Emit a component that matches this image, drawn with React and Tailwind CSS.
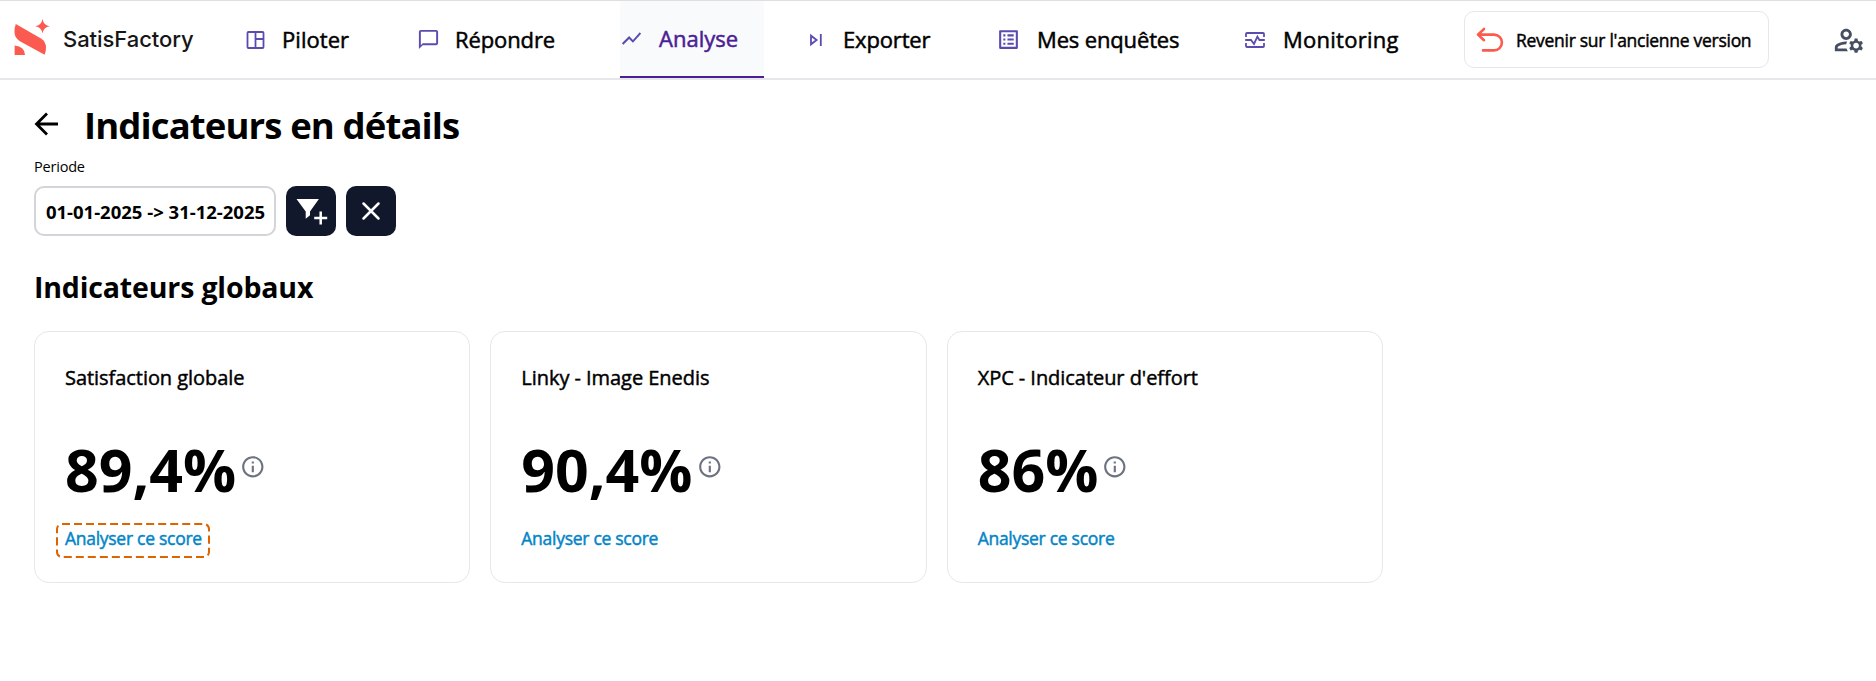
import {
  MdChatBubbleOutline,
  MdInfoOutline,
  MdOutlineListAlt,
  MdOutlineManageAccounts,
  MdShowChart,
} from "react-icons/md"

// dashboard icon used by "Piloter"
function PanelIcon() {
  return (
    <svg width="24" height="24" viewBox="0 0 24 24" fill="none" stroke="currentColor" strokeWidth="1.8">
      <rect x="3.5" y="4" width="16" height="16" rx="1" />
      <path d="M11.500 4v16M11.500 11h8" />
    </svg>
  )
}

function SkipIcon() {
  return (
    <svg width="24" height="24" viewBox="0 0 24 24" fill="none" stroke="currentColor" strokeWidth="1.8">
      <path d="M7 7.700v8.600l5.600-4.300zM16.800 6v12" />
    </svg>
  )
}

function PulseIcon() {
  return (
    <svg width="24" height="24" viewBox="0 0 24 24" fill="none" stroke="currentColor" strokeWidth="1.8">
      <path d="M3 9V6q0-1 1-1h16q1 0 1 1v3M3 15v3q0 1 1 1h16q1 0 1-1v-3" />
      <path d="M2.200 12H8l3 4 3.400-7.400L16.400 12h5.400" />
    </svg>
  )
}

const navItems = [
  { label: "Piloter", icon: <PanelIcon />, width: "w-[133px]", text: "tracking-[0.05px]" },
  { label: "Répondre", icon: <MdChatBubbleOutline size={23} />, width: "w-[163px]", iconPos: "-ml-[1.5px]", text: "tracking-[-0.1px]" },
  { label: "Analyse", icon: <MdShowChart size={23} />, width: "w-[144px]", active: true, iconPos: "-ml-px", text: "ml-px" },
  { label: "Exporter", icon: <SkipIcon />, width: "w-[153px]", text: "ml-px tracking-[-0.15px]" },
  { label: "Mes enquêtes", icon: <MdOutlineListAlt size={25} />, width: "w-[206px]", iconPos: "-ml-px", text: "ml-[2px] tracking-[-0.15px]" },
  { label: "Monitoring", icon: <PulseIcon />, width: "w-[181px]", text: "ml-[2px] tracking-[0.25px]" },
]

const indicators = [
  { title: "Satisfaction globale", score: "89,4%", focused: true },
  { title: "Linky - Image Enedis", score: "90,4%" },
  { title: "XPC - Indicateur d'effort", score: "86%" },
]

function Logo() {
  return (
    <div className="flex items-center w-[230px] pl-3.5">
      <svg width="37" height="38" viewBox="14 19 37 38" fill="#fb5a50" className="mb-[3px] shrink-0">
        <path d="M15.800 24 41 38.600Q46 42 46 47.500 46 51.500 44.600 54.800L19.500 41Q14.500 37.500 14.500 32 14.500 27 15.800 24Z" />
        <path d="M14.600 45.500Q24.800 46.500 25 55H14.600Z" />
        <path d="M42.500 19Q43.500 25.300 49.800 26.300 43.500 27.300 42.500 33.600 41.500 27.300 35.200 26.300 41.500 25.300 42.500 19Z" />
      </svg>
      <span className="ml-3 font-[Inter] text-[22px] font-medium tracking-[-0.05px] text-[#161616]">
        SatisFactory
      </span>
    </div>
  )
}

function NavItem({ item }) {
  return (
    <a
      className={`flex items-center h-full shrink-0 ${item.width} ${
        item.active ? "bg-[#f8fafc] border-b-2 border-[#4c1d95] text-[#4c1d95]" : "text-black"
      }`}
    >
      <span className="w-6 mr-3.5 text-[#5b4bb0]">
        <span className={`flex items-center justify-center ${item.iconPos || ""}`}>{item.icon}</span>
      </span>
      <span className={`text-[22px] whitespace-nowrap [-webkit-text-stroke:0.5px] ${item.text || ""}`}>
        {item.label}
      </span>
    </a>
  )
}

function IndicatorCard({ indicator }) {
  return (
    <div className="h-[252px] rounded-[15px] border border-gray-200 px-[30px] pt-8">
      <h3 className="text-xl leading-7 tracking-[-0.05px] [-webkit-text-stroke:0.45px]">{indicator.title}</h3>
      <div className="flex items-center mt-[47px] h-[60px]">
        <span className="text-[59px] leading-[60px] font-bold">{indicator.score}</span>
        <MdInfoOutline size={25.6} className="ml-1 mb-1 text-[#6b7280]" />
      </div>
      <a className="relative block w-max mt-[27px] text-[17.5px] leading-6 tracking-[-0.28px] text-[#0284c7] [-webkit-text-stroke:0.45px]">
        Analyser ce score
        {/* focus ring */}
        {indicator.focused && (
          <svg
            width="154"
            height="35"
            viewBox="0 0 154 35"
            fill="none"
            className="absolute -left-[9px] -top-[3px] max-w-none"
          >
            <rect x="1" y="1" width="152" height="33" rx="5" stroke="#dd6500" strokeWidth="2" pathLength="360" strokeDasharray="8 4" />
          </svg>
        )}
      </a>
    </div>
  )
}

export default function App() {
  return (
    <div className="min-h-screen bg-white text-black font-['Open_Sans',sans-serif]">
      {/* top bar */}
      <header className="flex h-20 border-t border-t-[#dfdfdf] border-b-2 border-b-gray-200">
        <Logo />
        <nav className="flex gap-10 ml-[14px] h-full">
          {navItems.map((item) => (
            <NavItem key={item.label} item={item} />
          ))}
        </nav>
        <button className="flex items-center w-[305px] h-[57px] mt-2.5 ml-[40px] pl-[11px] rounded-[10px] border border-gray-200">
          <svg width="28" height="26" viewBox="0 0 28 26" fill="none" stroke="#fb5a4e" strokeWidth="2.6" strokeLinecap="round" strokeLinejoin="round">
            <path d="M8 2 2 7.600l6 5.600M2.500 7.600H18a7.700 7.700 0 0 1 0 15.800H7" />
          </svg>
          <span className="ml-3 pt-0.5 text-[17.5px] tracking-[-0.28px] whitespace-nowrap [-webkit-text-stroke:0.45px]">
            Revenir sur l'ancienne version
          </span>
        </button>
        <div className="flex items-center ml-auto mr-2.5 text-[#454f60]">
          <MdOutlineManageAccounts size={34} />
        </div>
      </header>

      <main className="px-[34px] pt-5">
        <div className="flex items-center h-[50px]">
          <svg width="26" height="26" viewBox="0 0 26 26" fill="none" stroke="black" strokeWidth="2.8" className="mb-[3px]">
            <path d="M24 13H3M13 2.500 2.500 13 13 23.500" />
          </svg>
          <h1 className="ml-6 text-[36.5px] leading-[50px] font-bold tracking-[-0.88px]">
            Indicateurs en détails
          </h1>
        </div>

        {/* filters */}
        <div className="mt-[7px] text-[14.5px] leading-5 tracking-[-0.2px]">Periode</div>
        <div className="flex gap-2.5 mt-[9px]">
          <button className="flex items-center justify-center w-[242px] h-[50px] rounded-[10px] border-2 border-[#d4d4d8] pt-0.5 pl-px text-[18.5px] font-bold whitespace-nowrap">
            {"01-01-2025 -> 31-12-2025"}
          </button>
          <button className="w-[50px] h-[50px] rounded-[10px] bg-[#12182b]">
            <svg width="50" height="50" viewBox="0 0 50 50" fill="white">
              <path d="M10.500 13h22.400L24 25.500v3.700L19.700 32.700v-7.200z" />
              <path d="M28.200 32h13M34.700 25.500v13" stroke="white" strokeWidth="2.5" />
            </svg>
          </button>
          <button className="w-[50px] h-[50px] rounded-[10px] bg-[#12182b]">
            <svg width="50" height="50" viewBox="0 0 50 50" fill="none" stroke="white" strokeWidth="2.5" strokeLinecap="round">
              <path d="m17.500 17.500 15 15M32.500 17.500l-15 15" />
            </svg>
          </button>
        </div>

        <h2 className="mt-[33px] text-[28.5px] leading-9 font-bold tracking-[-0.15px]">Indicateurs globaux</h2>
        <div className="grid grid-cols-3 gap-5 w-[1349px] mt-[26px]">
          {indicators.map((indicator) => (
            <IndicatorCard key={indicator.title} indicator={indicator} />
          ))}
        </div>
      </main>
    </div>
  )
}
